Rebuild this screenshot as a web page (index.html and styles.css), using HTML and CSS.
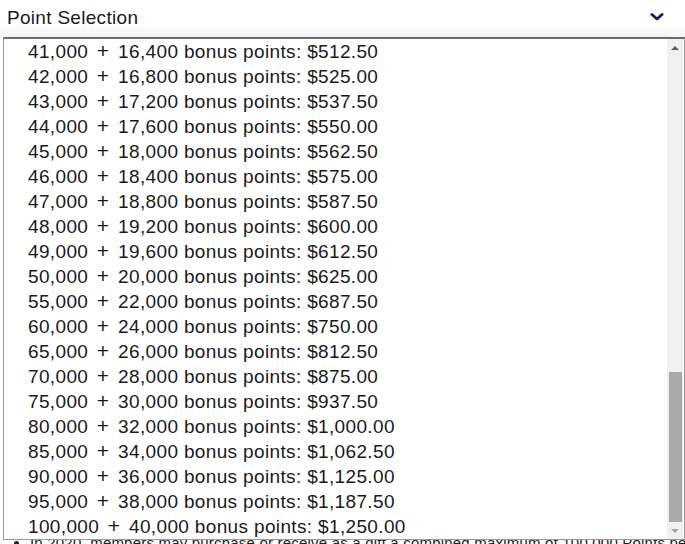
FILE: index.html
```html
<!DOCTYPE html>
<html>
<head>
<meta charset="utf-8">
<link rel="stylesheet" href="styles.css">
</head>
<body>
<div class="page">
  <div class="select-head">
    <span class="select-label">Point Selection</span>
    <svg class="chev" width="14" height="10" viewBox="0 0 14 10"><path d="M2 2.5 L7 7 L12 2.5" fill="none" stroke="#1b2547" stroke-width="3" stroke-linecap="round" stroke-linejoin="round"/></svg>
  </div>
  <div class="page-body">
    <div class="side-mark"></div>
    <ul class="terms">
      <li>In 2020, members may purchase or receive as a gift a combined maximum of 100,000 Points per calendar year.</li>
    </ul>
  </div>

  <div class="listbox">
    <ul class="options">
      <li>41,000 <span class="plus">+</span> 16,400 bonus points: $512.50</li>
      <li>42,000 <span class="plus">+</span> 16,800 bonus points: $525.00</li>
      <li>43,000 <span class="plus">+</span> 17,200 bonus points: $537.50</li>
      <li>44,000 <span class="plus">+</span> 17,600 bonus points: $550.00</li>
      <li>45,000 <span class="plus">+</span> 18,000 bonus points: $562.50</li>
      <li>46,000 <span class="plus">+</span> 18,400 bonus points: $575.00</li>
      <li>47,000 <span class="plus">+</span> 18,800 bonus points: $587.50</li>
      <li>48,000 <span class="plus">+</span> 19,200 bonus points: $600.00</li>
      <li>49,000 <span class="plus">+</span> 19,600 bonus points: $612.50</li>
      <li>50,000 <span class="plus">+</span> 20,000 bonus points: $625.00</li>
      <li>55,000 <span class="plus">+</span> 22,000 bonus points: $687.50</li>
      <li>60,000 <span class="plus">+</span> 24,000 bonus points: $750.00</li>
      <li>65,000 <span class="plus">+</span> 26,000 bonus points: $812.50</li>
      <li>70,000 <span class="plus">+</span> 28,000 bonus points: $875.00</li>
      <li>75,000 <span class="plus">+</span> 30,000 bonus points: $937.50</li>
      <li>80,000 <span class="plus">+</span> 32,000 bonus points: $1,000.00</li>
      <li>85,000 <span class="plus">+</span> 34,000 bonus points: $1,062.50</li>
      <li>90,000 <span class="plus">+</span> 36,000 bonus points: $1,125.00</li>
      <li>95,000 <span class="plus">+</span> 38,000 bonus points: $1,187.50</li>
      <li>100,000 <span class="plus">+</span> 40,000 bonus points: $1,250.00</li>
    </ul>
    <div class="scrollbar">
      <div class="arrow up"></div>
      <div class="track"><div class="thumb"></div></div>
      <div class="arrow down"></div>
    </div>
  </div>
</div>
</body>
</html>
```
FILE: styles.css
```css
* { box-sizing: border-box; }
html, body {
  margin: 0;
  padding: 0;
  background: #fff;
  overflow: hidden;
}
body {
  font-family: "Liberation Sans", Arial, sans-serif;
  color: #1a1a1a;
}
.page {
  position: relative;
  width: 685px;
  height: 544px;
  overflow: hidden;
}
.select-head {
  height: 37px;
  display: flex;
  align-items: center;
  justify-content: space-between;
  padding: 0 21px 0 7px;
  background: linear-gradient(to bottom, #fff 0, #fff 24px, #f3f3f3 37px);
}
.select-label {
  font-size: 19px;
  letter-spacing: 0.3px;
  margin-top: -1px;
}
.chev { display: block; margin-top: -3px; }
.page-body {
  display: flex;
  height: 507px;
}
.side-mark {
  width: 3px;
  margin-top: 160px;
  height: 60px;
  background: #e4e4e4;
}
.terms {
  margin: 0;
  padding: 496px 0 0 30px;
  font-size: 15px;
  letter-spacing: 0.2px;
  color: #222;
  white-space: nowrap;
}
.terms li { line-height: 20px; }

.listbox {
  position: absolute;
  top: 37px;
  left: 3px;
  width: 682px;
  height: 503px;
  background: #fff;
  border: 1px solid #9a9a9a;
  border-top: 2px solid #6a6a6a;
  display: flex;
}
.options {
  list-style: none;
  margin: 0;
  padding: 0 0 0 24px;
  flex: 1;
  font-size: 19px;
  letter-spacing: 0.35px;
}
.options li {
  height: 25px;
  line-height: 25px;
  white-space: nowrap;
}
.plus {
  display: inline-block;
  font-size: 21px;
  line-height: 1;
  margin: 0 3px 0 3px;
}
.scrollbar {
  width: 16px;
  margin-right: 1px;
  background: #f0f0f0;
  display: flex;
  flex-direction: column;
}
.arrow {
  height: 17px;
  display: flex;
  align-items: center;
  justify-content: center;
}
.arrow::after {
  content: "";
  border-left: 4px solid transparent;
  border-right: 4px solid transparent;
}
.arrow.up::after { border-bottom: 4px solid #606060; }
.arrow.down::after { border-top: 4px solid #a3a3a3; }
.track {
  flex: 1;
  display: flex;
  flex-direction: column;
  justify-content: flex-end;
  padding: 0 1px 0 2px;
}
.thumb {
  height: 150px;
  background: #a8a8a8;
}
```
